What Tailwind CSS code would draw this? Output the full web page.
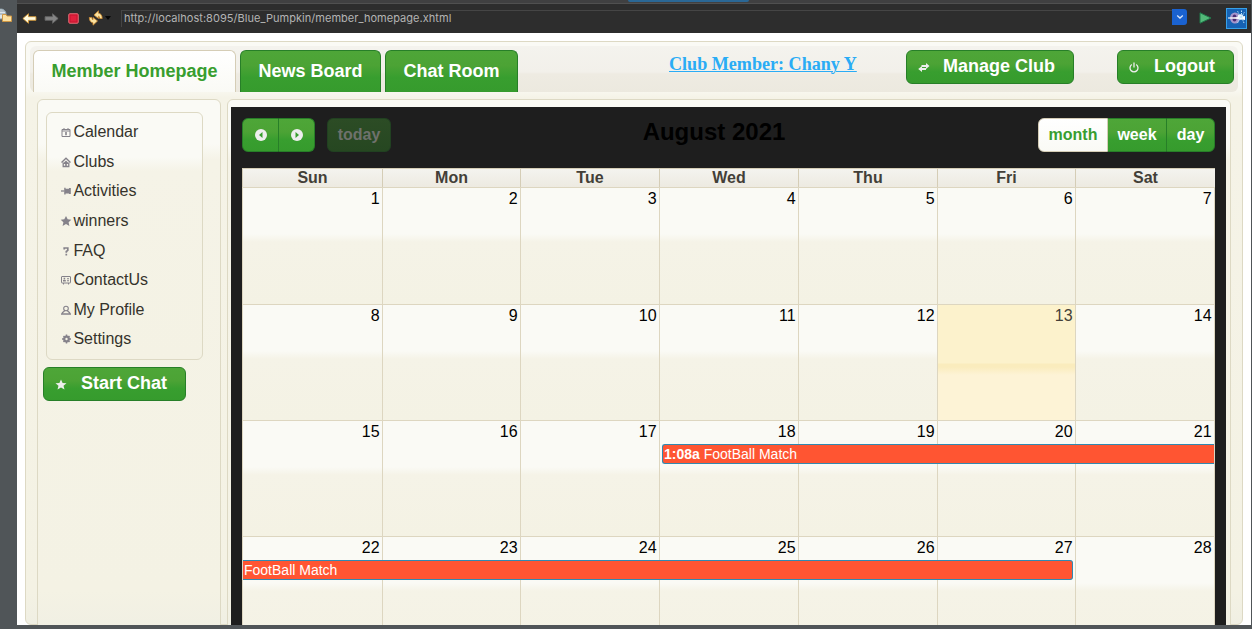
<!DOCTYPE html>
<html lang="en">
<head>
<meta charset="utf-8">
<title>Member Homepage</title>
<script src="https://cdn.jsdelivr.net/npm/@tailwindcss/browser@4"></script>
</head>
<body class="w-[1252px] h-[629px] overflow-hidden bg-[#505558] font-['Liberation_Sans',Arial,sans-serif]">
<div class="flex h-[625px] w-[1251px]">
  <aside class="w-[17px] shrink-0 pt-2 overflow-hidden">
    <svg width="14" height="16" viewBox="0 0 14 16"><circle cx="1" cy="6" r="5" fill="#dce5ea" stroke="#8fa3ae"/><path d="M0 3h5M0 6h6" stroke="#8b98a0"/><path d="M2.500 6.500h3.500l1 1.500h4.500v5.500h-9z" fill="#fbe0a0" stroke="#cf9744"/></svg>
  </aside>
  <main class="flex-1 min-w-0 flex flex-col bg-white">
    <header class="h-[33px] shrink-0 flex flex-col bg-[#2d2d2d]">
      <div class="h-1 shrink-0 bg-[#404041] border-b border-[#505050] pl-[611px]"><div class="w-[121px] h-[2px] bg-[#2a6795] rounded-b"></div></div>
      <div class="flex items-center h-7 pl-[5px] pr-[3px]">
        <svg class="w-[15px] h-[13px] shrink-0" viewBox="0 0 14 12"><path d="M.8 6 6 1.500v2.800h7v3.400H6v2.800z" fill="#fffbe0" stroke="#d89a35" stroke-width=".8"/></svg>
        <svg class="w-[15px] h-[13px] ml-[7px] shrink-0" viewBox="0 0 14 12"><path d="M13.200 6 8 1.500v2.800H1v3.400h7v2.800z" fill="#858585" stroke="#666" stroke-width=".8"/></svg>
        <svg class="w-[11px] h-[11px] ml-[9px] shrink-0" viewBox="0 0 11 11"><rect x=".8" y=".8" width="9.400" height="9.400" rx="1" fill="#e02d42" stroke="#f0717c"/><rect x="2" y="2" width="7" height="7" fill="#e0203c" stroke="#c41530"/></svg>
        <svg class="w-[16px] h-[16px] ml-[9px] shrink-0" viewBox="0 0 16 16"><path d="M6 5 10.500.8v2.400q3.500.5 3.700 5.300h-2.500q-.2-2.300-1.200-2.300v2.300z" fill="#fbe3a0" stroke="#cf8a30" stroke-width=".8"/><path d="M9.500 11 5 15.200v-2.400Q1.500 12.300 1.300 7.500h2.500Q4 9.800 5 9.800V7.500z" fill="#fbe3a0" stroke="#cf8a30" stroke-width=".8"/></svg>
        <svg class="w-[6px] h-[4px] ml-[1px] shrink-0" viewBox="0 0 6 4"><path d="M0 0h6L3 4z" fill="#080808"/></svg>
        <div class="ml-[10px] w-[1051px] h-[17px] border-l border-t border-[#454545] pl-[2px] flex text-[#b4b4b4] leading-[15px]"><span class="whitespace-nowrap font-['Inter',sans-serif] text-[11px] tracking-[0.04px]">http://localhost:8095/Blue_Pumpkin/member_homepage.xhtml</span></div>
        <div class="w-[15px] h-[16px] -mt-[2px] shrink-0 bg-[#1a62d0] rounded-r-[3px] flex items-center justify-center"><svg width="8" height="6" viewBox="0 0 8 6"><path d="m1.200 1.500 2.800 2.600 2.800-2.600" fill="none" stroke="#d9e6fb" stroke-width="1.300"/></svg></div>
        <svg class="w-[13px] h-[12px] ml-[12px] shrink-0" viewBox="0 0 13 12"><path d="M1 .8 12 6 1 11.200z" fill="#53b979" stroke="#20784a"/></svg>
        <svg class="w-[21px] h-[21px] ml-[14px] mr-[1px] shrink-0" viewBox="0 0 21 21"><rect x=".5" y=".5" width="20" height="20" fill="#1662b4" stroke="#36a0e8"/><ellipse cx="9" cy="10" rx="5" ry="5.500" fill="#a596cc"/><ellipse cx="8.500" cy="10" rx="2" ry="3.500" fill="#4a2c72"/><path d="M2 9.500 14 9l5-1v4l-5-1-12-.5z" fill="#fff"/><circle cx="14.500" cy="9" r="2.800" fill="#f2fbff"/><path d="m14.500 9-3-6M15.500 9V2M15.500 9l3-5M14.500 9l-3 6M15.500 9l2.500 6" stroke="#b6e2fa" stroke-dasharray="1.500 1"/></svg>
      </div>
    </header>

    <section class="mt-2 mx-2 h-[584px] rounded-[6px] border border-[#ddd9c4] bg-[linear-gradient(to_bottom,#fafaf5_0,#fafaf5_44px,#f5f3e7_56px,#f4f2e4_550px,#f0efe3_100%)] px-1 pt-1 flex flex-col">
      <nav class="h-[46px] shrink-0 rounded-[6px] bg-[linear-gradient(to_bottom,#f4f3ee_0,#f2f0ea_26px,#eeebe2_28px,#ece9df_100%)] flex pl-[3px] pr-1 pt-1 text-[18px] font-bold">
        <a class="w-[203px] h-[42px] shrink-0 flex justify-center border border-b-0 border-[#d5cdb6] rounded-t-[6px] bg-linear-to-b from-white to-[#fafaf5] leading-[40px] text-[#389e2f]"><span>Member Homepage</span></a>
        <a class="ml-1 w-[141px] h-[42px] shrink-0 flex justify-center border border-b-0 border-[#277f28] rounded-t-[6px] bg-[linear-gradient(to_bottom,#4ea638_0,#4ca335_35%,#389e2f_65%,#369b2d_100%)] leading-[40px] text-white">News Board</a>
        <a class="ml-1 w-[133px] h-[42px] shrink-0 flex justify-center border border-b-0 border-[#277f28] rounded-t-[6px] bg-[linear-gradient(to_bottom,#4ea638_0,#4ca335_35%,#389e2f_65%,#369b2d_100%)] leading-[40px] text-white">Chat Room</a>
        <a class="ml-[151px] w-[190px] shrink-0 whitespace-nowrap font-['Liberation_Serif',serif] text-[18.1px] leading-[29px] text-[#2aacf5] underline decoration-1 underline-offset-1">Club Member: Chany Y</a>
        <button class="ml-[47px] w-[168px] h-[34px] shrink-0 flex items-center border border-[#277f28] rounded-[6px] bg-[linear-gradient(to_bottom,#4ea638_0,#4ca335_40%,#389e2f_65%,#369b2d_100%)] text-white whitespace-nowrap">
          <svg class="w-[12px] h-[9px] ml-[11px] shrink-0" viewBox="0 0 12 9"><path d="M3.500 4V2H8V0l3.500 3L8 6V4zM8 5v2H4v2L.2 6 4 3v2z" fill="#eee"/></svg>
          <span class="ml-[13px] -mt-[2px]">Manage Club</span></button>
        <button class="ml-[43px] w-[117px] h-[34px] shrink-0 flex items-center border border-[#277f28] rounded-[6px] bg-[linear-gradient(to_bottom,#4ea638_0,#4ca335_40%,#389e2f_65%,#369b2d_100%)] text-white">
          <svg class="w-[10px] h-[11px] ml-[11px] shrink-0" viewBox="0 0 10 11"><path d="M2.800 2.500a4 4 0 1 0 4.400 0M5 .5v5" fill="none" stroke="#eee" stroke-width="1.300"/></svg>
          <span class="ml-[15px] -mt-[2px]">Logout</span></button>
      </nav>
      <div class="mt-[7px] ml-[7px] mr-[7px] h-[526px] shrink-0 flex overflow-hidden">
        <aside class="w-[184px] shrink-0 h-[540px] border border-[#ddd9c4] rounded-t-[6px] px-2 pt-3 bg-[linear-gradient(to_bottom,#fafaf5_0,#fafaf5_44px,#f5f3e7_60px,#f4f2e4_490px,#f0efe3_100%)]">
          <div id="menu" class="w-[157px] h-[248px] border border-[#ddd9c4] rounded-[6px] pl-[14px] pt-[4.4px] bg-[linear-gradient(to_bottom,#fafaf5_0,#fafaf5_44px,#f5f3e7_58px,#f4f2e4_100%)] text-[16px] text-[#35332c]"></div>
          <button class="mt-[7px] -ml-[3px] w-[143px] h-[34px] flex items-center border border-[#277f28] rounded-[6px] bg-[linear-gradient(to_bottom,#4ea638_0,#4ca335_40%,#389e2f_65%,#369b2d_100%)] text-white text-[18px] font-bold whitespace-nowrap">
            <svg class="w-[12px] h-[11px] ml-[11px] shrink-0" viewBox="0 0 12 11"><path d="M6 .5 7.600 4l3.900.3-3 2.500 1 3.700L6 8.500l-3.500 2 1-3.700-3-2.500L4.400 4z" fill="#eee"/></svg>
            <span class="ml-[14px] -mt-[2px]">Start Chat</span></button>
        </aside>
        <section class="ml-[6px] w-[1004px] shrink-0 h-[540px] border border-[#ddd9c4] rounded-t-[6px] pt-[7px] pl-[3px] pr-1 bg-[linear-gradient(to_bottom,#fafaf5_0,#fafaf5_44px,#f5f3e7_60px,#f4f2e4_490px,#f0efe3_100%)]">
          <div class="h-[533px] w-[995px] bg-[#1e1e1e] pl-[11px] pt-[11px]">
            <div class="w-[973px] h-[50px] grid grid-cols-3 items-start text-[16px] font-bold text-white">
              <div class="flex">
                <button class="w-[37px] h-[34px] flex items-center justify-center rounded-l-[6px] border border-[#277f28] bg-[linear-gradient(to_bottom,#4ea638_0,#4ca335_40%,#389e2f_65%,#369b2d_100%)]"><svg width="12" height="12" viewBox="0 0 12 12"><circle cx="6" cy="6" r="6" fill="#eee"/><path d="M7.500 3v6L4 6z" fill="#389e2f"/></svg></button>
                <button class="w-[36px] h-[34px] flex items-center justify-center rounded-r-[6px] border border-l-0 border-[#277f28] bg-[linear-gradient(to_bottom,#4ea638_0,#4ca335_40%,#389e2f_65%,#369b2d_100%)]"><svg width="12" height="12" viewBox="0 0 12 12"><circle cx="6" cy="6" r="6" fill="#eee"/><path d="M4.500 3v6L8 6z" fill="#389e2f"/></svg></button>
                <button class="ml-3 w-[64px] h-[34px] rounded-[6px] border border-[#214121] bg-linear-to-b from-[#2c4c25] to-[#264721] text-[#6e716c]">today</button>
              </div>
              <h2 class="text-center text-[24px] leading-[28px] text-black whitespace-nowrap -ml-[29px]">August 2021</h2>
              <div class="flex justify-end">
                <button class="w-[70px] h-[34px] rounded-l-[6px] border border-[#d5cdb6] bg-linear-to-b from-white to-[#fafaf5] text-[#389e2f]">month</button>
                <button class="w-[58px] h-[34px] border-y border-[#277f28] bg-[linear-gradient(to_bottom,#4ea638_0,#4ca335_40%,#389e2f_65%,#369b2d_100%)]">week</button>
                <button class="w-[49px] h-[34px] rounded-r-[6px] border border-[#277f28] bg-[linear-gradient(to_bottom,#4ea638_0,#4ca335_40%,#389e2f_65%,#369b2d_100%)]">day</button>
              </div>
            </div>
            <div id="calendar" class="relative w-[973px] grid grid-cols-[140px_138px_139px_139px_139px_138px_140px] grid-rows-[19px_117px_116px_116px_116px] text-[16px]">
            </div>
          </div>
        </section>
      </div>
    </section>
  </main>
</div>
<script>
const menu = [
  ['Calendar','<path d="M1 2.500h8v7H1zM1 4h8M3 1v2M7 1v2" fill="none" stroke="#85828a"/><path d="M4.200 5h1.600v3.200H4.200z" fill="#85828a"/>'],
  ['Clubs','<path d="M.5 5.500 5 1.200l4.500 4.300M2.200 5.500v4h5.600v-4" fill="none" stroke="#85828a" stroke-width="1.300"/><path d="M5 3.500 7.500 6v1H2.500V6zM4.200 7h1.600v2.500H4.200z" fill="#85828a"/>'],
  ['Activities','<path d="M0 5h3.500" stroke="#85828a" stroke-width="1.300"/><path d="M3.200 1.800h1.400v1H8v-.7h1.800v6H8v-.7H4.600v1H3.200z" fill="#85828a"/>'],
  ['winners','<path d="M5 0 6.700 3.300l3.600.4-2.700 2.500.8 3.700L5 8.100 1.600 9.900l.8-3.700L-.3 3.700l3.600-.4z" fill="#85828a"/>'],
  ['FAQ','<path d="M3.200 3.600V2h3.600v2.400L5.300 5.500v1.300M5.300 7.800v1.700" fill="none" stroke="#85828a" stroke-width="1.700"/>'],
  ['ContactUs','<rect x=".5" y="1.500" width="9" height="6.500" rx=".5" fill="none" stroke="#85828a"/><path d="M2 5h2.800v1.500H2zM2.600 2.800h1.600v1.800H2.600zM6 3.200h2v1H6zM6 5.200h2v1H6zM2 8h1v1.500H2zM7 8h1v1.500H7z" fill="#85828a"/>'],
  ['My Profile','<circle cx="5" cy="3.500" r="2.300" fill="none" stroke="#85828a" stroke-width="1.100"/><path d="M3.500 6 1 8M6.500 6 9 8M0 9h10" fill="none" stroke="#85828a" stroke-width="1.300"/>'],
  ['Settings','<path d="M5.500.5v9M1 5h9M2.500 2l6 6M8.500 2l-6 6" stroke="#85828a" stroke-width="1.500"/><circle cx="5.500" cy="5" r="2.500" fill="none" stroke="#85828a" stroke-width="1.800"/><circle cx="5.500" cy="5" r="1.200" fill="#f4f2e4"/>']
];
document.getElementById('menu').innerHTML = menu.map(([t, p]) =>
  `<a class="flex items-center h-[29.6px] whitespace-nowrap"><svg class="w-[10px] h-[10px] mr-[2.4px] shrink-0 overflow-visible" viewBox="0 0 10 10">${p}</svg>${t}</a>`).join('');
let out = ['Sun','Mon','Tue','Wed','Thu','Fri','Sat'].map(d =>
  `<div class="border-l border-t last:border-r border-[#d5cdb6] bg-linear-to-b from-[#f4f3ef] to-[#edeae1] text-center leading-[18px] font-bold text-[#433f38]">${d}</div>`).join('');
for (let n = 1; n <= 28; n++) {
  const bg = n === 13 ? 'text-[#433f38] bg-[linear-gradient(to_bottom,#fcf2cc_0,#fcf2cc_58px,#faecbd_59px,#faecbd_62px,#fdf3d6_70px,#fdf3d6_100%)]'
                      : 'text-black bg-[linear-gradient(to_bottom,#fafaf5_0,#fafaf5_46px,#f5f3e7_54px,#f4f2e4_100%)]';
  out += `<div class="border-l border-t border-[#ddd6c0] pr-[2.4px] text-right leading-[21px] ${bg} ${n % 7 === 0 ? 'border-r' : ''}">${n}</div>`;
}
out += `<div class="absolute left-[420px] top-[276px] w-[552px] h-[20px] rounded-l-[3px] border border-r-0 border-[#3189b0] bg-[#ff5532] pl-[1px] text-[14px] leading-[18px] text-white whitespace-nowrap"><b>1:08a</b> FootBall Match</div>
<div class="absolute left-[1px] top-[392px] w-[830px] h-[20px] rounded-r-[3px] border border-l-0 border-[#3189b0] bg-[#ff5532] pl-[1px] text-[14px] leading-[18px] text-white whitespace-nowrap">FootBall Match</div>`;
document.getElementById('calendar').innerHTML = out;
</script>
</body>
</html>
